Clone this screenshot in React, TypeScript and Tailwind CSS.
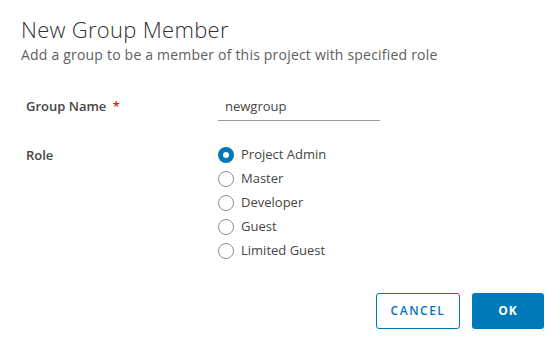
const roles = ["Project Admin", "Master", "Developer", "Guest", "Limited Guest"];

export default function App() {
  const selected = "Project Admin";

  return (
    <div
      className="w-[560px] h-[346px] bg-white text-[#333] pl-[21px] pr-[16px] pt-[14px]"
      style={{ fontFamily: '"Open Sans", "Liberation Sans", sans-serif' }}
    >
      {/* Header */}
      <h1 className="text-[22px] leading-[30px] font-light text-[#313131] tracking-[0.3px]">
        New Group Member
      </h1>
      <p className="text-[14px] leading-[20px] text-[#5e5e5e] mt-[1px] tracking-[0.2px]">
        Add a group to be a member of this project with specified role
      </p>

      {/* Form */}
      <div className="mt-[31px] pl-[5px]">
        <div className="flex items-start">
          <label className="w-[192px] text-[13px] font-semibold text-[#454545] leading-[20px]">
            Group Name <span className="text-[#e12200] ml-[3px]">*</span>
          </label>
          <div className="w-[162px] border-b border-[#9a9a9a] pl-[7px] pb-[4px] text-[13px] leading-[20px] text-[#454545]">
            newgroup
          </div>
        </div>

        <div className="flex items-start mt-[22px]">
          <label className="w-[192px] text-[13px] font-semibold text-[#454545] leading-[24px]">
            Role
          </label>
          <div className="flex flex-col">
            {roles.map((role) => (
              <div key={role} className="flex items-center h-[24px]">
                <span
                  className={
                    role === selected
                      ? "w-[16px] h-[16px] rounded-full bg-[#0079b8] flex items-center justify-center"
                      : "w-[16px] h-[16px] rounded-full border border-[#8c8c8c] bg-white"
                  }
                >
                  {role === selected && (
                    <span className="w-[6px] h-[6px] rounded-full bg-white" />
                  )}
                </span>
                <span className="ml-[7px] text-[13px] text-[#454545]">{role}</span>
              </div>
            ))}
          </div>
        </div>
      </div>

      {/* Footer */}
      <div className="flex justify-end gap-[12px] mt-[30px]">
        <button className="w-[84px] h-[36px] rounded-[3px] border border-[#0079b8] text-[#0079b8] text-[12px] font-semibold tracking-[1.5px] bg-white">
          CANCEL
        </button>
        <button className="w-[72px] h-[36px] rounded-[3px] bg-[#0079b8] text-white text-[12px] font-bold tracking-[1px]">
          OK
        </button>
      </div>
    </div>
  );
}
